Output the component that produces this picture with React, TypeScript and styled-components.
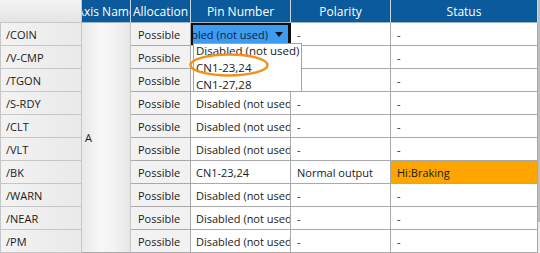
import React from 'react';
import styled, { createGlobalStyle } from 'styled-components';

const GlobalStyle = createGlobalStyle`
  body {
    margin: 0;
    background: #ffffff;
    font-family: 'Open Sans', 'Noto Sans', sans-serif;
  }
`;

const Frame = styled.div`
  position: relative;
  display: flex;
  width: 540px;
  height: 253px;
  overflow: hidden;
  font-size: 11px;
  color: #1a1a1a;
`;

const Grid = styled.div`
  display: grid;
  grid-template-columns: 82px 49px 60px 100px 100px 147px;
  grid-template-rows: 23px repeat(10, 23px);
  width: 538px;
`;

const Cell = styled.div`
  box-sizing: border-box;
  display: flex;
  align-items: center;
  padding: 0 6px;
  overflow: hidden;
  white-space: nowrap;
  border-right: 1px solid #a9a9a9;
  border-bottom: 1px solid #a9a9a9;
  background: #ffffff;
`;

const Corner = styled(Cell)`
  background: linear-gradient(to bottom, #f4f4f4, #e4e4e4);
  border-right-color: #c6c6c6;
  border-bottom-color: #c6c6c6;
`;

const HeadCell = styled(Cell)`
  justify-content: center;
  padding: 0 2px;
  background: #0b5a9c;
  color: #ffffff;
  font-size: 12px;
  border-right-color: #c9d6e3;
  border-bottom-color: #9fb3c8;
`;

const RowHead = styled(Cell)`
  padding-left: 5px;
  background: linear-gradient(to right, #f3f3f3, #e9e9e9);
  border-right-color: #c6c6c6;
  border-bottom-color: #c6c6c6;
  border-left: 1px solid #c6c6c6;
`;

const AxisCell = styled(Cell)`
  grid-column: 2;
  grid-row: 2 / span 10;
  padding-left: 3px;
  background: linear-gradient(to right, #e9e9e9, #f7f7f7 40%, #f2f2f2 70%, #e6e6e6);
  border-right-color: #c6c6c6;
`;

const AllocCell = styled(Cell)`
  padding-left: 7px;
  background: #f2f2f2;
`;

const PinCell = styled(Cell)`
  padding-left: 5px;
`;

const StatusCell = styled(Cell)<{ $hot?: boolean }>`
  background: ${(p) => (p.$hot ? '#ffa500' : '#ffffff')};
`;

const EditCell = styled(Cell)`
  padding: 0 5px 0 2px;
  gap: 7px;
  background: #3d9cf2;
  color: #0f2340;
  box-shadow: inset 0 0 0 2px #111111;
  border-right: 1px solid #111111;
`;

const EditText = styled.div`
  flex: 1;
  display: flex;
  justify-content: flex-end;
  overflow: hidden;
  span {
    flex-shrink: 0;
  }
`;

const Arrow = styled.div`
  width: 0;
  height: 0;
  border-left: 4px solid transparent;
  border-right: 4px solid transparent;
  border-top: 5px solid #111111;
  margin-right: 2px;
`;

const Scrollbar = styled.div`
  width: 2px;
  display: flex;
  flex-direction: column;
  background: #ececec;
`;

const Thumb = styled.div`
  height: 222px;
  background: #bdbdbd;
`;

const DropList = styled.ul`
  position: absolute;
  left: 193px;
  top: 43px;
  width: 109px;
  height: 49px;
  box-sizing: border-box;
  margin: 0;
  padding: 0;
  list-style: none;
  overflow: hidden;
  background: #ffffff;
  border: 1px solid #a3a3a3;
  font-size: 11.5px;
`;

const DropItem = styled.li`
  height: 17px;
  line-height: 14px;
  padding-left: 2px;
  white-space: nowrap;
`;

const Ring = styled.svg`
  position: absolute;
  left: 188px;
  top: 52px;
  pointer-events: none;
`;

const signals = ['/COIN', '/V-CMP', '/TGON', '/S-RDY', '/CLT', '/VLT', '/BK', '/WARN', '/NEAR', '/PM'];

const App = () => {
  return (
    <>
      <GlobalStyle />
      <Frame>
        <Grid>
          <Corner />
          <HeadCell>Axis Name</HeadCell>
          <HeadCell>Allocation</HeadCell>
          <HeadCell>Pin Number</HeadCell>
          <HeadCell>Polarity</HeadCell>
          <HeadCell>Status</HeadCell>
          <AxisCell>A</AxisCell>
          {signals.map((name, i) => {
            const bk = name === '/BK';
            const row = { gridRow: i + 2 };
            return (
              <React.Fragment key={name}>
                <RowHead style={{ ...row, gridColumn: 1 }}>{name}</RowHead>
                <AllocCell style={{ ...row, gridColumn: 3 }}>Possible</AllocCell>
                {i === 0 ? (
                  <EditCell style={{ ...row, gridColumn: 4 }}>
                    <EditText>
                      <span>Disabled (not used)</span>
                    </EditText>
                    <Arrow />
                  </EditCell>
                ) : (
                  <PinCell style={{ ...row, gridColumn: 4 }}>
                    {bk ? 'CN1-23,24' : 'Disabled (not used)'}
                  </PinCell>
                )}
                <Cell style={{ ...row, gridColumn: 5 }}>{bk ? 'Normal output' : '-'}</Cell>
                <StatusCell $hot={bk} style={{ ...row, gridColumn: 6 }}>
                  {bk ? 'Hi:Braking' : '-'}
                </StatusCell>
              </React.Fragment>
            );
          })}
        </Grid>
        <Scrollbar>
          <Thumb />
        </Scrollbar>
        <DropList>
          <DropItem>Disabled (not used)</DropItem>
          <DropItem>CN1-23,24</DropItem>
          <DropItem>CN1-27,28</DropItem>
        </DropList>
        <Ring width="82" height="26" viewBox="0 0 82 26">
          <ellipse cx="41" cy="13" rx="38.5" ry="10.5" fill="none" stroke="#f0911c" strokeWidth="2.4" />
        </Ring>
      </Frame>
    </>
  );
};

export default App;
